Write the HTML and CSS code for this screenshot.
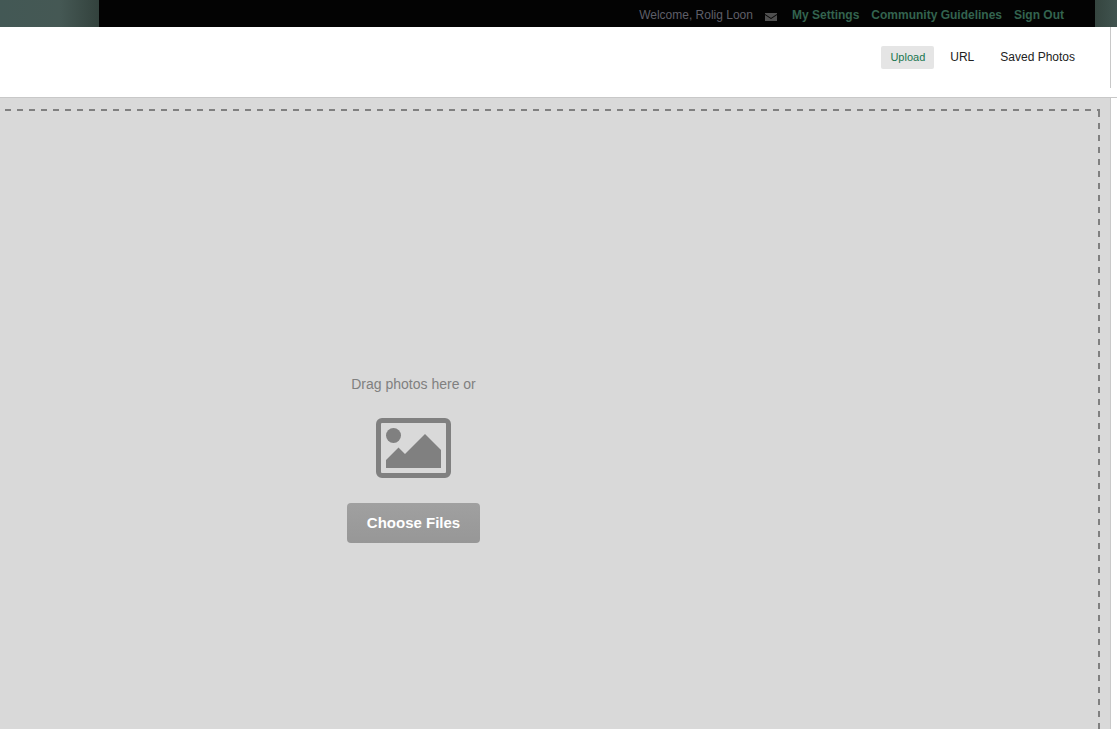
FILE: index.html
```html
<!DOCTYPE html>
<html lang="en">
<head>
<meta charset="utf-8">
<meta name="viewport" content="width=device-width, initial-scale=1">
<title>Upload Photos</title>
<link rel="stylesheet" href="styles.css">
</head>
<body>
<div class="topbar">
  <div class="edge-left"></div>
  <nav class="account">
    <span class="welcome">Welcome, Rolig Loon</span>
    <a class="mail" href="#" aria-label="Messages"><svg width="12" height="8" viewBox="0 0 12 8" aria-hidden="true"><path fill="#505050" d="M0 0h12v1L6 5 0 1zM0 2l6 4 6-4v6H0z"/></svg></a>
    <a href="#">My Settings</a>
    <a href="#">Community Guidelines</a>
    <a href="#">Sign Out</a>
  </nav>
  <div class="edge-right"></div>
</div>
<header class="header">
  <nav class="sources">
    <button class="source active" type="button">Upload</button>
    <button class="source" type="button">URL</button>
    <button class="source" type="button">Saved Photos</button>
  </nav>
</header>
<main class="panel">
  <div class="dropzone">
    <p class="hint">Drag photos here or</p>
    <svg class="picture" width="75" height="60" viewBox="0 0 75 60" aria-hidden="true"><path fill="#808080" fill-rule="evenodd" d="M6 0h63a6 6 0 0 1 6 6v48a6 6 0 0 1-6 6H6a6 6 0 0 1-6-6V6a6 6 0 0 1 6-6zM6 5a1 1 0 0 0-1 1v48a1 1 0 0 0 1 1h63a1 1 0 0 0 1-1V6a1 1 0 0 0-1-1z"/><circle cx="17.5" cy="17.5" r="7.5" fill="#808080"/><path fill="#808080" d="M10 50v-8l12.500-12.500L29 36l20-20 16 16v18z"/></svg>
    <button class="choose" type="button">Choose Files</button>
  </div>
</main>
</body>
</html>
```
FILE: styles.css
```css
* {
  box-sizing: border-box;
}

body {
  margin: 0;
  min-height: 100vh;
  display: flex;
  flex-direction: column;
  overflow-x: hidden;
  background: #fff;
  font-family: "Liberation Sans", Arial, sans-serif;
  font-size: 12px;
}

button {
  border: 0;
  font-family: inherit;
  cursor: pointer;
}

.topbar {
  display: flex;
  height: 27px;
  background: #030303;
}

.edge-left {
  width: 99px;
  background: linear-gradient(to right, #435855 0, #455854 60px, #33423d 99px);
}

.edge-right {
  width: 22px;
  background: linear-gradient(to right, #35453f, #40534f);
}

.account {
  flex: 1;
  display: flex;
  justify-content: flex-end;
  align-items: center;
  gap: 12px;
  padding: 2px 31px 0 0;
}

.account a {
  color: #33634f;
  font-weight: bold;
  text-decoration: none;
}

.welcome {
  color: #5f5f68;
}

.account .mail {
  display: flex;
  margin: 4px 3px 0 0;
}

.header {
  display: flex;
  height: 71px;
  padding-right: 6px;
  border-bottom: 1px solid #c8c8c8;
}

.sources {
  flex: 1;
  display: flex;
  justify-content: flex-end;
  align-items: flex-start;
  gap: 6px;
  height: 61px;
  padding: 19px 25px 0 0;
  border-right: 1px solid #c8c8c8;
}

.source {
  height: 23px;
  padding: 0 10px 2px;
  border-radius: 2px;
  background: none;
  color: #222;
  font-size: 12px;
}

.source.active {
  padding: 0 9px 1px;
  background: #e5e5e5;
  color: #1a7550;
  font-size: 11px;
}

.panel {
  flex: 1;
  display: flex;
  margin-right: 6px;
  padding: 11px 10px 0 5px;
  border-right: 1px solid #c8c8c8;
  background: #d9d9d9;
}

.dropzone {
  flex: 1;
  display: flex;
  flex-direction: column;
  align-items: center;
  padding: 266px 278px 0 0;
  background:
    repeating-linear-gradient(to right, #808080 0 6px, transparent 6px 12px) top / 100% 2px no-repeat,
    repeating-linear-gradient(to bottom, transparent 0 2px, #808080 2px 8px, transparent 8px 12px) right / 2px 100% no-repeat;
}

.hint {
  margin: 0;
  color: #808080;
  font-size: 14px;
  line-height: 18px;
}

.picture {
  margin: 25px 0;
}

.choose {
  height: 40px;
  padding: 0 20px 2px;
  border-radius: 4px;
  background: linear-gradient(#a0a0a0, #979797);
  color: #fff;
  font-size: 15px;
  font-weight: bold;
}
```
